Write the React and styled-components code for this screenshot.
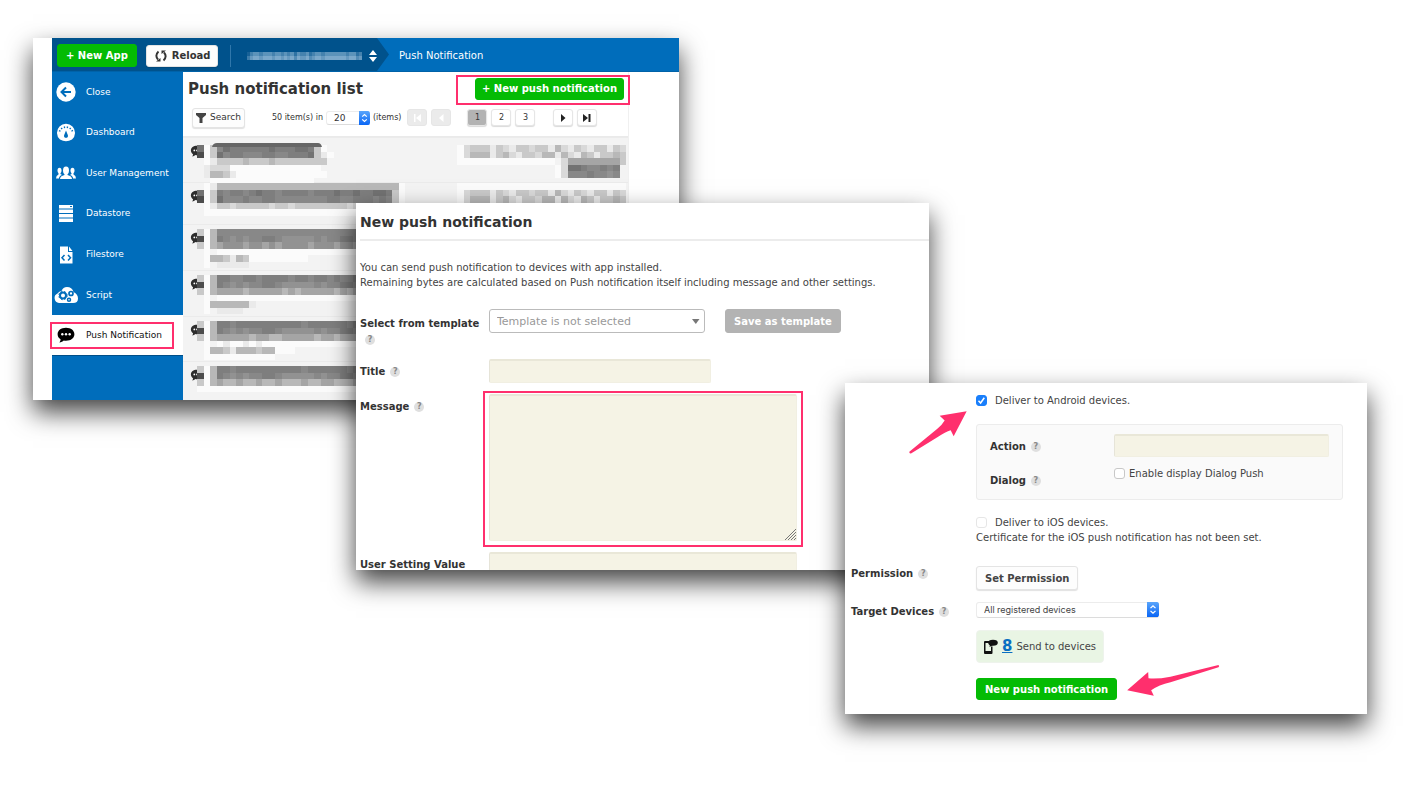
import React from "react";
import styled, { createGlobalStyle, css } from "styled-components";

const pink = "#ff2f6d";
const green = "#04bb04";
const blue = "#006dbb";
const navy = "#00528c";
const cream = "#f5f3e5";

const GlobalStyle = createGlobalStyle`
  *, *::before, *::after { box-sizing: border-box; }
  body {
    margin: 0;
    background: #fff;
    color: #333;
    font-family: "DejaVu Sans", Verdana, sans-serif;
    font-size: 10px;
    line-height: 15px;
  }
  button, input, select, textarea { font: inherit; color: inherit; margin: 0; }
  h1, h2, p { margin: 0; }
`;

/* ---------- shared parts ---------- */

const Canvas = styled.div`
  position: relative;
  min-height: 100vh;
  overflow: hidden;
`;

const Win = styled.section`
  position: absolute;
  left: ${(p) => p.$x}px;
  top: ${(p) => p.$y}px;
  width: ${(p) => p.$w}px;
  background: #fff;
  box-shadow: 0 12px 24px rgba(0, 0, 0, 0.74);
`;

const WinBody = styled.div`
  display: flex;
  flex-direction: column;
  overflow: hidden;
  height: ${(p) => (p.$h ? `${p.$h}px` : "auto")};
`;

const Highlight = styled.span`
  position: absolute;
  inset: ${(p) => p.$inset};
  border: 2px solid ${pink};
  pointer-events: none;
`;

const Button = styled.button`
  display: inline-flex;
  align-items: center;
  justify-content: center;
  gap: 4px;
  height: ${(p) => p.$h || 22}px;
  padding: 0 ${(p) => p.$pad || 8}px;
  border: 1px solid #e4e4e4;
  border-radius: 3px;
  background: #fdfdfd;
  box-shadow: 0 1px 1px rgba(0, 0, 0, 0.12);
  font-weight: ${(p) => (p.$plain ? 400 : 700)};
  white-space: nowrap;
  ${(p) =>
    p.$tone === "green" &&
    css`
      border-color: ${green};
      background: ${green};
      color: #fff;
      box-shadow: none;
    `}
  ${(p) =>
    p.$tone === "grey" &&
    css`
      border-color: #b3b3b3;
      background: #b3b3b3;
      color: #fff;
      box-shadow: none;
    `}
`;

const HelpDot = styled.button`
  display: inline-flex;
  align-items: center;
  justify-content: center;
  width: 10px;
  height: 10px;
  margin-left: 5px;
  padding: 0;
  border: 0;
  border-radius: 50%;
  background: #dfdfdf;
  color: #888;
  font-size: 8px;
  font-weight: 700;
  line-height: 10px;
  vertical-align: middle;
`;

const Help = () => <HelpDot type="button" aria-label="Help">?</HelpDot>;

const fieldLook = css`
  display: block;
  border: 1px solid #f1efe2;
  border-top: 2px solid #e9e7d8;
  border-left-color: #e6e4d8;
  border-radius: 2px;
  background: ${cream};
`;

const TextInput = styled.input`
  ${fieldLook}
  width: ${(p) => p.$w || "100%"};
  height: ${(p) => p.$h || 24}px;
  padding: 0 6px;
`;

const TextArea = styled.textarea`
  ${fieldLook}
  width: 308px;
  height: 147px;
  padding: 6px;
  resize: none;
`;

const SelectWrap = styled.span`
  position: relative;
  display: inline-flex;
  width: ${(p) => p.$w}px;
  svg { position: absolute; right: 0; top: 0; pointer-events: none; }
`;

const MacSelect = styled.select`
  appearance: none;
  width: 100%;
  height: ${(p) => p.$h}px;
  padding: 0 14px 0 7px;
  border: 1px solid #ececec;
  border-bottom-color: #dcdcdc;
  border-radius: 3px;
  background: #fff;
  font-family: ${(p) => p.$font || "inherit"};
  font-size: 9px;
  line-height: 12px;
`;

const Stepper = ({ w, h }) => (
  <svg width={w} height={h} viewBox="0 0 12 16" preserveAspectRatio="none" aria-hidden="true">
    <defs>
      <linearGradient id="stepper" x1="0" y1="0" x2="0" y2="1">
        <stop offset="0" stopColor="#5aa5fb" />
        <stop offset="1" stopColor="#0a66f5" />
      </linearGradient>
    </defs>
    <path d="M0 0H10Q12 0 12 3V13Q12 16 10 16H0Z" fill="url(#stepper)" />
    <path d="M3.5 6.5L6 4L8.5 6.5M3.5 9.5L6 12L8.5 9.5" fill="none" stroke="#fff" strokeWidth="1.3" />
  </svg>
);

/* ---------- console window ---------- */

const TopBar = styled.header`
  display: flex;
  height: 34px;
  margin-left: 19px;
  background: ${blue};
  border-bottom: 1px solid #0062a8;
  color: #fff;
`;

const AppBar = styled.div`
  display: flex;
  align-items: center;
  width: 337px;
  padding: 2px 0 0 5px;
  background: ${navy};
  clip-path: polygon(0 0, 325px 0, 100% 50%, 325px 100%, 0 100%);
  button + button { margin-left: 9px; color: #333; }
`;

const Divider = styled.span`
  width: 1px;
  height: 22px;
  margin: 0 16px 0 12px;
  background: #2f77ab;
`;

const Crumb = styled.span`
  padding: 0 10px;
  line-height: 35px;
`;

const Columns = styled.div`
  display: flex;
  flex: 1;
  min-height: 0;
  margin-left: 19px;
`;

const Sidebar = styled.nav`
  flex: none;
  width: 131px;
  background: ${blue};
`;

const NavList = styled.ul`
  display: grid;
  grid-auto-rows: 1fr;
  height: 284px;
  margin: 0;
  padding: 0;
  list-style: none;
`;

const NavItem = styled.li`
  position: relative;
  ${(p) =>
    p.$active &&
    css`
      background: #fff;
      border-bottom: 1px solid #004e88;
    `}
`;

const NavLink = styled.a`
  display: flex;
  align-items: center;
  height: 100%;
  color: ${(p) => (p.$active ? "#111" : "#fff")};
  font-size: 9px;
  text-decoration: none;
  svg { flex: none; width: 24px; height: 24px; margin: 0 8px 0 2px; }
`;

const ListPane = styled.main`
  flex: none;
  width: 446px;
  border-right: 1px solid #f0f0f0;
`;

const PaneHead = styled.div`
  display: flex;
  align-items: center;
  justify-content: space-between;
  height: 33px;
  padding: 0 4px 0 5px;
`;

const PaneTitle = styled.h1`
  font-size: 15px;
  line-height: 24px;
`;

const Marked = styled.div`
  position: relative;
  display: flex;
`;

const Tools = styled.div`
  display: flex;
  align-items: center;
  height: 31px;
  padding: 0 0 6px 9px;
  font-size: 9px;
`;

const Count = styled.label`
  display: flex;
  align-items: center;
  gap: 3px;
  margin: 0 6px 0 27px;
  font-size: 8px;
  white-space: nowrap;
`;

const Pages = styled.div`
  display: flex;
  gap: 4px;
  margin-left: ${(p) => p.$gap || 0}px;
`;

const PageButton = styled.button`
  display: flex;
  align-items: center;
  justify-content: center;
  width: 20px;
  height: 17px;
  padding: 0;
  border: 1px solid #e6e6e6;
  border-radius: 3px;
  background: ${(p) => (p.$current ? "#b3b3b3" : p.disabled ? "#ebebeb" : "#fff")};
  box-shadow: ${(p) => (p.disabled ? "none" : "0 1px 1px rgba(0,0,0,.15)")};
  color: ${(p) => (p.disabled ? "#fff" : "#333")};
  font-size: 8px;
`;

const Items = styled.ul`
  margin: 0;
  padding: 0;
  list-style: none;
  background: #f3f3f3;
  border-top: 1px solid #eaeaea;
`;

const Item = styled.li`
  display: flex;
  height: ${(p) => p.$h}px;
  border-top: 1px solid #ebebeb;
  svg { overflow: visible; }
`;

const Bubble = ({ size = 14, fill = "#2d2d2d", box = "0 0 24 24" }) => (
  <svg width={size} height={size} viewBox={box} aria-hidden="true">
    <path d="M12 3C5.700 3 1.500 6.500 1.500 11C1.500 13.600 2.900 15.900 5.200 17.400C5.200 19 4.600 20.300 3.700 21.300C6 21 7.900 20 9.200 18.800C10.100 19 11 19.100 12 19.100C18.300 19.100 22.500 15.500 22.500 11C22.500 6.500 18.300 3 12 3Z" fill={fill} />
    <circle cx="7.400" cy="11" r="1.500" fill="#fff" />
    <circle cx="12" cy="11" r="1.500" fill="#fff" />
    <circle cx="16.600" cy="11" r="1.500" fill="#fff" />
  </svg>
);

/* Each character picks a grey level; a dot leaves the cell empty. */
const CELL = 6.5;
const shades = {
  4: "#4c4c4c",
  6: "#727272",
  7: "#7e7e7e",
  8: "#888",
  9: "#929292",
  a: "#a5a5a5",
  b: "#b8b8b8",
  c: "#c9c9c9",
  d: "#d9d9d9",
  e: "#eaeaea",
  f: "#fbfbfb",
};
const Mosaic = ({ rows, tab }) => (
  <svg width={66 * CELL} height={rows.length * CELL} shapeRendering="crispEdges" aria-hidden="true">
    {rows.map((row, y) =>
      [...row].map((c, x) =>
        c === "." ? null : (
          <rect key={`${x}-${y}`} x={x * CELL} y={y * CELL} width={CELL} height={CELL} fill={shades[c]} />
        )
      )
    )}
    {tab && <path d="M15 2Q16 -2 20 -2H121Q124 -2 125 2Z" fill="#666" shapeRendering="auto" />}
  </svg>
);

const gapFill = (n) => ".".repeat(n);
const stampA = "fdcccecdeccdccebdecdeccecd";
const stampB = "fdbbbecbdeccdbbebdebceccbc";
const rowsData = [
  {
    h: 45,
    tab: true,
    rows: [
      "6fc867777776777665cf.".replace("5", "7") + gapFill(19) + stampA,
      "4fc687788877887776cef" + gapFill(19) + stampB,
      ".feccccbcccbcccccccc." + gapFill(19) + "fffffffffffffff.daaaaaaaac",
      ".edddffffffffffffff.." + gapFill(34) + "fd66788787",
      ".ebbceffffffffffffff." + gapFill(34) + "fd88878898",
      "..ffffffffffffffff",
    ],
  },
  {
    h: 42,
    rows: [
      ".febbbbbbbbbbbbbbbbbbbbbbbbbbbbf" + gapFill(8) + "f".repeat(26),
      "6fc787787677877778777677677667cf" + gapFill(8) + stampA,
      "4fc688878877888888887788777878cf" + gapFill(8) + stampB,
      ".feccdcccccdccdccccccccdcccccc.",
      ".fffffffffffffffffffffffffffff.",
    ],
  },
  {
    h: 46,
    rows: [
      "cfb8888888888888888888888888888c",
      "4fb7898988778999998988778878898c",
      "cfba999a99a9a9999a999a99aa99aaac",
      ".f.fffffffffffffffffffffffffffff",
      ".fbbcebcfffffffff",
      ".f.eeeee",
    ],
  },
  {
    h: 46,
    rows: [
      "cfb7788778777787787787887678787c",
      "4fb7898988778999998988778878898c",
      "cfbaaaabaaaaababaaaaababaaaaaaac",
      ".f.fffffffffffffffffffffffffffff",
      ".fbbbbbbe",
      ".f.eeee",
    ],
  },
  {
    h: 45,
    rows: [
      "cfb7787777777777877777787777787c",
      "4fb7898988778999998988778878898c",
      "cfbaaaaabaabbaaaaabaabaaabaabaac",
      ".f.feffefeffffffffffffffffffff",
      ".fbbcebbbcbbfff",
      ".fffffffffff",
    ],
  },
  {
    h: 45,
    rows: [
      "cfb7787777777777877777787777787c",
      "4fb7898988778999998988778878898c",
      "cfbabbabbabbabbbabbaabbbabaabbac",
      "fffffffffffffffffffffffffffffff",
    ],
  },
];

const RowIcon = styled.span`
  flex: none;
  width: 14px;
  margin-left: 7px;
  padding-top: 6px;
  svg { display: block; }
`;

const RowText = styled.span`
  flex: none;
  margin-left: -7px;
  padding-top: ${(p) => p.$top}px;
`;

const navIcons = {
  Close: (
    <svg viewBox="0 0 24 24" aria-hidden="true">
      <circle cx="12" cy="12" r="9.700" fill="#fff" />
      <path d="M17 12H8M12 7.500L7.500 12L12 16.500" fill="none" stroke={blue} strokeWidth="2" />
    </svg>
  ),
  Dashboard: (
    <svg viewBox="0 0 24 24" aria-hidden="true">
      <path d="M6 18.500A9 9 0 1 1 18 18.500Q12 22 6 18.500Z" fill="#fff" />
      <path d="M5.500 10.500A7 7 0 0 1 18.500 10.500" fill="none" stroke={blue} strokeWidth="1.600" strokeDasharray="1.300 1.700" />
      <path d="M12 9.500L13.800 14A2 2 0 1 1 10.200 14Z" fill={blue} />
    </svg>
  ),
  "User Management": (
    <svg viewBox="0 0 24 24" fill="#fff" aria-hidden="true">
      <ellipse cx="12" cy="9.500" rx="3" ry="4" />
      <path d="M10.500 12H13.500V14Q18 15 18 18H6Q6 15 10.500 14Z" />
      <ellipse cx="5.500" cy="9.500" rx="2" ry="2.800" />
      <path d="M4.500 11H6.500V13L8 14Q5 15 5 17.500H2Q2 14.500 4.500 13.500Z" />
      <ellipse cx="18.500" cy="9.500" rx="2" ry="2.800" />
      <path d="M19.500 11H17.500V13L16 14Q19 15 19 17.500H22Q22 14.500 19.500 13.500Z" />
    </svg>
  ),
  Datastore: (
    <svg viewBox="0 0 24 24" aria-hidden="true">
      <path d="M5 3H19V6.500H5ZM5 7.500H19V11H5ZM5 12H19V15.500H5ZM5 16.500H19V20H5Z" fill="#fff" />
      <path d="M16 4.500H18" stroke={blue} strokeWidth="1" />
    </svg>
  ),
  Filestore: (
    <svg viewBox="0 0 24 24" aria-hidden="true">
      <path d="M6 3.500H14V9H18.500V20.500H6ZM15 3.500L18.500 8H15Z" fill="#fff" />
      <path d="M10.500 12L8 14.800L10.500 17.500M14 12L16.500 14.800L14 17.500" fill="none" stroke={blue} strokeWidth="1.500" />
    </svg>
  ),
  Script: (
    <svg viewBox="0 0 24 24" aria-hidden="true">
      <path d="M5 20A5 5 0 0 1 3.500 10.500Q5 8 7.500 8Q9 4 13 4Q18 4 19.500 9Q24 11 24 15.500Q24 20 19 20Z" fill="#fff" />
      <circle cx="9" cy="12.500" r="3" fill="none" stroke={blue} strokeWidth="2" />
      <circle cx="9" cy="12.500" r="4.200" fill="none" stroke={blue} strokeWidth="1" strokeDasharray="1.700 1.700" />
      <circle cx="17" cy="10.500" r="2" fill="none" stroke={blue} strokeWidth="1.700" />
      <circle cx="15" cy="16.800" r="1.500" fill="none" stroke={blue} strokeWidth="1.500" />
    </svg>
  ),
  "Push Notification": <Bubble size={24} fill="#000" box="-3 -3 30 30" />,
};

const AppName = () => (
  <svg width="115" height="12" viewBox="0 0 115 12" shapeRendering="crispEdges" aria-hidden="true">
    {[..."3566566656656564655645665666666656645"].map((c, i) => (
      <React.Fragment key={i}>
        <rect x={i * 3.1} y="2" width="3.100" height="4" fill="#b8d3e8" opacity={(c - 2) / 8} />
        <rect x={i * 3.1} y="6" width="3.100" height="4" fill="#b8d3e8" opacity={c / 9} />
      </React.Fragment>
    ))}
  </svg>
);

function ConsoleWindow() {
  return (
    <Win $x={33} $y={38} $w={646}>
      <WinBody $h={362}>
        <TopBar>
          <AppBar>
            <Button type="button" $tone="green" $h={23}>+ New App</Button>
            <Button type="button" $pad={7}>
              <svg width="14" height="12" viewBox="0 0 14 12" aria-hidden="true">
                <path d="M4.500 1.500Q.5 5.500 4 9.500M9.500 10.500Q13.500 6.500 10 2.500" fill="none" stroke="#333" strokeWidth="1.900" />
                <path d="M2 11.500H6.500V8ZM12 .5H7.500V4Z" fill="#333" />
              </svg>
              Reload
            </Button>
            <Divider />
            <AppName />
            <svg width="20" height="12" viewBox="0 0 20 12" aria-hidden="true">
              <path d="M7 5L11 0L15 5ZM7 7L11 12L15 7Z" fill="#fff" />
            </svg>
          </AppBar>
          <Crumb>Push Notification</Crumb>
        </TopBar>
        <Columns>
          <Sidebar>
            <NavList>
              {Object.entries(navIcons).map(([name, icon]) => {
                const active = name === "Push Notification";
                return (
                  <NavItem key={name} $active={active}>
                    <NavLink href="#" $active={active}>
                      {icon}
                      {name}
                    </NavLink>
                    {active && <Highlight $inset="7px 9px 6px -2px" />}
                  </NavItem>
                );
              })}
            </NavList>
          </Sidebar>
          <ListPane>
            <PaneHead>
              <PaneTitle>Push notification list</PaneTitle>
              <Marked>
                <Button type="button" $tone="green" $pad={6}>+ New push notification</Button>
                <Highlight $inset="-3px -6px -5px -19px" />
              </Marked>
            </PaneHead>
            <Tools>
              <Button type="button" $plain $h={20} $pad={3}>
                <svg width="10" height="10" viewBox="0 0 10 10" aria-hidden="true">
                  <path d="M0 0H10V2L6.500 5V10H3.500V5L0 2Z" fill="#444" />
                </svg>
                Search
              </Button>
              <Count>
                50 item(s) in
                <SelectWrap $w={44}>
                  <MacSelect $h={14} defaultValue="20">
                    <option>20</option>
                  </MacSelect>
                  <Stepper w={11} h={14} />
                </SelectWrap>
                (items)
              </Count>
              <Pages>
                <PageButton type="button" disabled aria-label="First page">
                  <svg width="8" height="8" viewBox="0 0 8 8"><path d="M1 0H2.500V8H1ZM8 0V8L3 4Z" fill="#fff" /></svg>
                </PageButton>
                <PageButton type="button" disabled aria-label="Previous page">
                  <svg width="8" height="8" viewBox="0 0 8 8"><path d="M6.500 0V8L2 4Z" fill="#fff" /></svg>
                </PageButton>
              </Pages>
              <Pages $gap={16}>
                <PageButton type="button" $current>1</PageButton>
                <PageButton type="button">2</PageButton>
                <PageButton type="button">3</PageButton>
              </Pages>
              <Pages $gap={18}>
                <PageButton type="button" aria-label="Next page">
                  <svg width="8" height="8" viewBox="0 0 8 8"><path d="M2 0L6.500 4L2 8Z" fill="#222" /></svg>
                </PageButton>
                <PageButton type="button" aria-label="Last page">
                  <svg width="8" height="8" viewBox="0 0 8 8"><path d="M0 0L5 4L0 8ZM5.500 0H7.500V8H5.500Z" fill="#222" /></svg>
                </PageButton>
              </Pages>
            </Tools>
            <Items>
              {rowsData.map((row, i) => (
                <Item key={i} $h={row.h}>
                  <RowIcon>
                    <Bubble />
                  </RowIcon>
                  <RowText $top={i === 0 ? 7 : i === 1 ? 0 : 4}>
                    <Mosaic rows={row.rows} tab={row.tab} />
                  </RowText>
                </Item>
              ))}
            </Items>
          </ListPane>
        </Columns>
      </WinBody>
    </Win>
  );
}

/* ---------- message form window ---------- */

const FormTitle = styled.h2`
  height: 38px;
  margin-left: 4px;
  border-bottom: 2px solid #ececec;
  font-size: 14px;
  line-height: 38px;
`;

const Intro = styled.p`
  margin: 19px 0 19px 4px;
  color: #444;
`;

const Form = styled.form`
  display: flex;
  flex-direction: column;
  gap: 11px;
  padding-left: 4px;
`;

const Field = styled.div`
  display: grid;
  grid-template-columns: ${(p) => p.$label}px minmax(0, 1fr);
  align-items: start;
  margin-top: ${(p) => p.$space || 0}px;
`;

const FieldLabel = styled.div`
  padding-top: ${(p) => p.$drop ?? 5}px;
  color: #333;
  font-weight: 700;
  line-height: 16px;
`;

const TemplateLine = styled.div`
  display: flex;
  gap: 20px;
`;

const TemplateSelect = styled.select`
  appearance: none;
  width: 100%;
  height: 24px;
  padding: 0 7px;
  border: 1px solid #bbb;
  border-radius: 3px;
  background: #fff;
  color: #999;
  font-size: 11px;
`;

const AreaWrap = styled.div`
  position: relative;
  justify-self: start;
`;

const Grip = styled.svg`
  position: absolute;
  right: 0;
  bottom: 0;
`;

function MessageWindow() {
  return (
    <Win $x={356} $y={203} $w={573}>
      <WinBody $h={367}>
        <FormTitle>New push notification</FormTitle>
        <Intro>
          You can send push notification to devices with app installed.
          <br />
          Remaining bytes are calculated based on Push notification itself including message and other settings.
        </Intro>
        <Form>
          <Field $label={129}>
            <FieldLabel $drop={7}>
              <label htmlFor="template">Select from template</label>
              <Help />
            </FieldLabel>
            <TemplateLine>
              <SelectWrap $w={216}>
                <TemplateSelect id="template">
                  <option>Template is not selected</option>
                </TemplateSelect>
                <svg width="18" height="24" viewBox="0 0 18 24" aria-hidden="true">
                  <path d="M5 10H12.500L8.800 15Z" fill="#777" />
                </svg>
              </SelectWrap>
              <Button type="button" $tone="grey" $h={24}>Save as template</Button>
            </TemplateLine>
          </Field>
          <Field $label={129}>
            <FieldLabel>
              <label htmlFor="title">Title</label>
              <Help />
            </FieldLabel>
            <TextInput id="title" $w="222px" />
          </Field>
          <Field $label={129}>
            <FieldLabel>
              <label htmlFor="message">Message</label>
              <Help />
            </FieldLabel>
            <AreaWrap>
              <TextArea id="message" />
              <Grip width="13" height="13" viewBox="0 0 13 13" aria-hidden="true">
                <path d="M1 12L12 1M4 12L12 4M7 12L12 7M10 12L12 10" stroke="#777" strokeWidth="1" />
              </Grip>
              <Highlight $inset="-3px -6px -6px -6px" />
            </AreaWrap>
          </Field>
          <Field $label={129}>
            <FieldLabel>
              <label htmlFor="setting">User Setting Value</label>
            </FieldLabel>
            <TextInput id="setting" $w="308px" />
          </Field>
        </Form>
      </WinBody>
    </Win>
  );
}

/* ---------- delivery options window ---------- */

const DeliveryForm = styled.form`
  display: flex;
  flex-direction: column;
  gap: 10px;
  padding: 10px 24px 14px 6px;
  color: #444;
`;

const Stack = styled.div`
  display: flex;
  flex-direction: column;
  align-items: flex-start;
`;

const CheckLabel = styled.label`
  display: flex;
  align-items: center;
  gap: ${(p) => p.$gap}px;
  line-height: 15px;
`;

const Check = styled.input`
  appearance: none;
  flex: none;
  width: 11px;
  height: 11px;
  border: 1px solid ${(p) => (p.disabled ? "#e6e6e6" : "#c8c8c8")};
  border-radius: 3px;
  background: #fff;
  &:checked {
    border-color: #1a7ffb;
    background: #1a7ffb
      url("data:image/svg+xml,%3Csvg xmlns='http://www.w3.org/2000/svg' viewBox='0 0 9 9'%3E%3Cpath d='M1.500 4.800L3.600 7L7.300 1.800' fill='none' stroke='white' stroke-width='1.500'/%3E%3C/svg%3E");
  }
`;

const Panel = styled.div`
  display: flex;
  flex-direction: column;
  gap: 9px;
  align-self: stretch;
  margin: 16px 0 15px;
  padding: 9px 13px 10px;
  border: 1px solid #ececec;
  border-radius: 3px;
  background: #fafafa;
`;

const SendBox = styled.div`
  display: flex;
  align-items: center;
  gap: 4px;
  height: 33px;
  padding: 0 7px;
  border: 1px solid #eef3ec;
  border-radius: 4px;
  background: #e9f5e4;
  a { color: #0a6fc2; font-size: 15px; font-weight: 700; }
`;

const Actions = styled.div`
  display: flex;
  flex-direction: column;
  align-items: flex-start;
  gap: 15px;
  padding-left: 125px;
`;

const Arrow = styled.svg`
  position: absolute;
  left: ${(p) => p.$x}px;
  top: ${(p) => p.$y}px;
`;

function DeliveryWindow() {
  return (
    <Win $x={845} $y={383} $w={522}>
      <WinBody>
        <DeliveryForm>
          <Field $label={125}>
            <span />
            <Stack>
              <CheckLabel $gap={8}>
                <Check type="checkbox" defaultChecked />
                Deliver to Android devices.
              </CheckLabel>
              <Panel>
                <Field $label={124}>
                  <FieldLabel>
                    <label htmlFor="action">Action</label>
                    <Help />
                  </FieldLabel>
                  <TextInput id="action" $h={23} />
                </Field>
                <Field $label={124}>
                  <FieldLabel $drop={7}>
                    Dialog
                    <Help />
                  </FieldLabel>
                  <CheckLabel $gap={4}>
                    <Check type="checkbox" />
                    Enable display Dialog Push
                  </CheckLabel>
                </Field>
              </Panel>
              <CheckLabel $gap={8}>
                <Check type="checkbox" disabled />
                Deliver to iOS devices.
              </CheckLabel>
              <p>Certificate for the iOS push notification has not been set.</p>
            </Stack>
          </Field>
          <Field $label={125} $space={11}>
            <FieldLabel $drop={0}>
              Permission
              <Help />
            </FieldLabel>
            <Stack>
              <Button type="button" $h={24}>Set Permission</Button>
            </Stack>
          </Field>
          <Field $label={125} $space={2}>
            <FieldLabel $drop={2}>
              <label htmlFor="target">Target Devices</label>
              <Help />
            </FieldLabel>
            <SelectWrap $w={183}>
              <MacSelect id="target" $h={16} $font='Inter, "Liberation Sans", sans-serif'>
                <option>All registered devices</option>
              </MacSelect>
              <Stepper w={12} h={15} />
            </SelectWrap>
          </Field>
          <Actions>
            <SendBox>
              <svg width="14" height="16" viewBox="0 0 14 16" aria-hidden="true">
                <path d="M6 2H1Q0 2 0 3V14Q0 15 1 15H7.500Q8.500 15 8.500 14V7.500H7V12H1.500V4H6Z" fill="#111" />
                <ellipse cx="9" cy="3.700" rx="4.800" ry="3" fill="#111" />
                <path d="M6 5L5.500 8L9 6Z" fill="#111" />
              </svg>
              <a href="#">8</a>
              Send to devices
            </SendBox>
            <Button type="submit" $tone="green">New push notification</Button>
          </Actions>
        </DeliveryForm>
      </WinBody>
      <Arrow $x={64} $y={28} width="58" height="43" viewBox="0 0 174 128">
        <path d="M173 0L92 14L107 28Q100 40 85 53L1 122Q0 128 6 127L85 78Q110 62 125 57L134 75Z" fill={pink} />
      </Arrow>
      <Arrow $x={282} $y={282} width="93" height="31" viewBox="0 0 278 93">
        <path d="M0 76L63 21L64 40Q90 43 130 35L274 0Q278 4 274 7L130 52Q95 60 72 76L80 92Z" fill={pink} />
      </Arrow>
    </Win>
  );
}

export default function App() {
  return (
    <>
      <GlobalStyle />
      <Canvas>
        <ConsoleWindow />
        <MessageWindow />
        <DeliveryWindow />
      </Canvas>
    </>
  );
}
